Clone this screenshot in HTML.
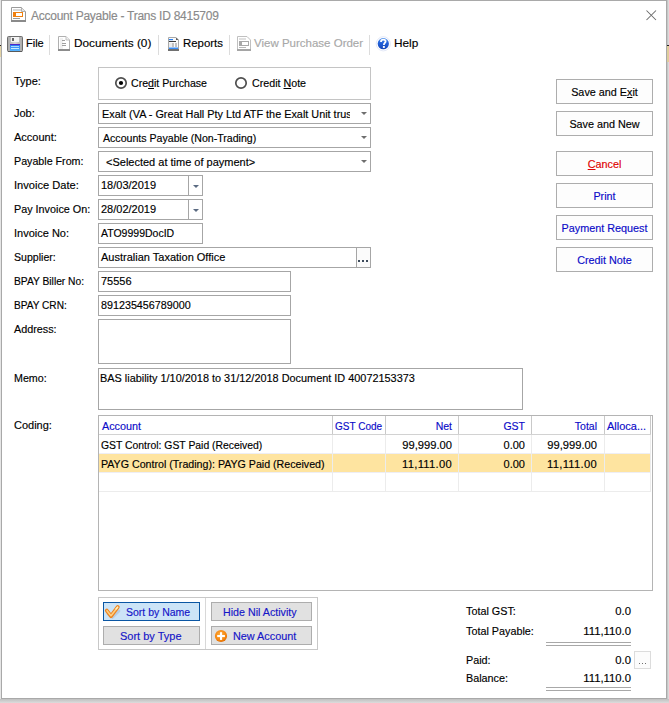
<!DOCTYPE html>
<html><head><meta charset="utf-8">
<style>
*{box-sizing:border-box;margin:0;padding:0}
html,body{width:669px;height:703px;overflow:hidden;background:#d6d6d6}
body{position:relative;font-family:"Liberation Sans",sans-serif;font-size:11px;color:#000;-webkit-text-stroke:0.15px currentColor}
.a{position:absolute}
#win{position:absolute;left:1px;top:0;width:666px;height:699px;background:#fff;border:1px solid #a9a9a9}
.t{position:absolute;white-space:nowrap;line-height:13px;font-size:11px}
.box{position:absolute;border:1px solid #a6a6a6;background:#fff;overflow:hidden}
.btn{position:absolute;border:1px solid #adadad;background:#fdfdfd;text-align:center;font-size:10.8px;line-height:13px;white-space:nowrap}
.sep{position:absolute;width:1px;background:#dcdcdc}
.arr{position:absolute;width:0;height:0;border-left:3px solid transparent;border-right:3px solid transparent;border-top:3px solid #6e6e6e}
.u{text-decoration:underline}
.blue{color:#0b0bc8}
.ghd{position:absolute;top:416px;height:19px;border-right:1px solid #c9c9c9;border-bottom:1px solid #d5d5d5}
.gtx{position:absolute;white-space:nowrap;font-size:10.5px;line-height:13px}
.pbtn{position:absolute;border:1px solid #adadad;background:#e1e1e1}
.pt{color:#1515c8}
</style></head><body>
<!-- backdrop -->
<div class="a" style="left:0;top:0;width:1px;height:703px;background:#e5e5e5"></div>
<div class="a" style="left:0;top:45px;width:1px;height:1px;background:#222"></div>
<div class="a" style="left:0;top:46px;width:1px;height:11px;background:#e3d3a5"></div>
<div class="a" style="left:667px;top:0;width:1px;height:703px;background:#c6c6c6"></div>
<div class="a" style="left:668px;top:0;width:1px;height:703px;background:#d9d9d9"></div>
<div class="a" style="left:667px;top:45px;width:2px;height:1px;background:#222"></div>
<div class="a" style="left:667px;top:46px;width:2px;height:16px;background:#dfcd9c"></div>
<div class="a" style="left:0;top:699px;width:669px;height:4px;background:linear-gradient(#c0c0c0,#dcdcdc)"></div>
<div id="win"></div>

<!-- title bar -->
<svg class="a" style="left:10px;top:6px" width="17" height="17" viewBox="0 0 17 17">
  <path d="M1.5 1.5H11.5L15.5 5.5V14.5H1.5Z" fill="#fff" stroke="#9a9a9a"/>
  <path d="M11.5 1.5V5.5H15.5" fill="#e6e6e6" stroke="#b0b0b0"/>
  <rect x="3" y="3" width="8" height="2" fill="#d8d8d8"/>
  <rect x="3" y="6" width="10" height="5" fill="#f0800f"/>
  <rect x="6" y="7" width="6" height="3" fill="#fff"/>
  <rect x="3" y="12" width="7" height="1" fill="#9a9a9a"/>
  <rect x="1" y="14" width="15" height="2" fill="#8a8a8a"/>
</svg>
<div class="t" style="left:31px;top:9px;font-size:12px;letter-spacing:-0.25px;line-height:15px;color:#8a8a8a">Account Payable - Trans ID 8415709</div>
<svg class="a" style="left:646px;top:10px" width="11" height="11" viewBox="0 0 11 11">
  <path d="M0.5 0.5L10 10M10 0.5L0.5 10" stroke="#6a6a6a" stroke-width="1.05"/>
</svg>

<!-- toolbar -->
<svg class="a" style="left:7px;top:36px" width="16" height="16" viewBox="0 0 16 16">
  <defs><linearGradient id="fb" x1="0" y1="0" x2="0" y2="1"><stop offset="0" stop-color="#1e6ff0"/><stop offset="1" stop-color="#5ab8ff"/></linearGradient>
  <linearGradient id="fg" x1="0" y1="0" x2="1" y2="0"><stop offset="0" stop-color="#a8a8a8"/><stop offset="0.5" stop-color="#d6d6d6"/><stop offset="1" stop-color="#a8a8a8"/></linearGradient></defs>
  <rect x="0.5" y="0.5" width="15" height="15" rx="1" fill="url(#fg)" stroke="#6e6e6e"/>
  <rect x="4" y="1" width="8" height="5" fill="#f4f4f4"/>
  <rect x="5" y="2" width="2" height="3" fill="#666"/>
  <rect x="3" y="8" width="10" height="7" fill="url(#fb)"/>
  <rect x="3" y="8" width="10" height="1" fill="#5026c8"/>
  <rect x="4" y="10" width="8" height="1" fill="#a8dcff"/>
  <rect x="4" y="12" width="8" height="1" fill="#c8eaff"/>
  <rect x="1" y="15" width="14" height="1" fill="#5a5a5a"/>
</svg>
<div class="t" style="left:26px;top:36px;font-size:11px;line-height:14px">File</div>
<div class="sep" style="left:49px;top:35px;height:20px"></div>
<svg class="a" style="left:57px;top:35px" width="14" height="17" viewBox="0 0 14 17">
  <path d="M1.5 1.5H9L12.5 5V15.5H1.5Z" fill="#fff" stroke="#b0b0b0"/>
  <rect x="3" y="3" width="3" height="11" fill="#f0f0f0"/>
  <path d="M9 1.5V5H12.5" fill="#f2f2f2" stroke="#c0c0c0"/>
  <rect x="5" y="5" width="3" height="1" fill="#a0a0a0"/>
  <rect x="5" y="8" width="4" height="1" fill="#a0a0a0"/>
  <rect x="5" y="10" width="4" height="1" fill="#a0a0a0"/>
  <rect x="1" y="14" width="12" height="2" fill="#8c8c8c"/>
</svg>
<div class="t" style="left:74px;top:36px;font-size:11.8px;line-height:14px">Documents (0)</div>
<div class="sep" style="left:158px;top:35px;height:20px"></div>
<svg class="a" style="left:167px;top:36px" width="13" height="15" viewBox="0 0 13 15">
  <path d="M1.5 1.5H9L11.5 4V13.5H1.5Z" fill="#fafafa" stroke="#a8a8a8"/>
  <path d="M9 1.5L11.5 4H9Z" fill="#5e5e5e"/>
  <rect x="2" y="3" width="4" height="1.2" fill="#2a80f0"/>
  <rect x="2" y="5" width="7" height="1" fill="#3c3c3c"/>
  <rect x="2" y="7" width="3" height="4" fill="#ececec"/>
  <rect x="5" y="7" width="2" height="4" fill="#c2c2c2"/>
  <rect x="8" y="7" width="2" height="4" fill="#c2c2c2"/>
  <rect x="2" y="11.5" width="9" height="1.5" fill="#3a8ef6"/>
  <rect x="1" y="13" width="11" height="2" fill="#707070"/>
</svg>
<div class="t" style="left:183px;top:36px;font-size:11.4px;line-height:14px">Reports</div>
<div class="sep" style="left:229px;top:35px;height:20px"></div>
<svg class="a" style="left:236px;top:35px" width="16" height="16" viewBox="0 0 16 16">
  <path d="M1.5 1.5H11L14.5 5V14.5H1.5Z" fill="#fff" stroke="#c0c0c0"/>
  <rect x="3" y="3" width="7" height="2" fill="#e0e0e0"/>
  <rect x="3" y="6" width="10" height="5" fill="#a8a8a8"/>
  <rect x="6" y="7" width="6" height="3" fill="#fff"/>
  <rect x="3" y="12" width="7" height="1" fill="#b8b8b8"/>
  <rect x="1" y="14" width="14" height="2" fill="#a5a5a5"/>
</svg>
<div class="t" style="left:254px;top:36px;font-size:11.5px;line-height:14px;color:#a8a8a8">View Purchase Order</div>
<div class="sep" style="left:369px;top:35px;height:20px"></div>
<svg class="a" style="left:375px;top:36px" width="16" height="16" viewBox="0 0 16 16">
  <defs><linearGradient id="hb" x1="0" y1="0" x2="0" y2="1"><stop offset="0" stop-color="#4a8ef0"/><stop offset="0.45" stop-color="#2160d8"/><stop offset="1" stop-color="#1a48b8"/></linearGradient></defs>
  <circle cx="8.3" cy="7.8" r="7.1" fill="none" stroke="#d8e0f4" stroke-width="0.7"/>
  <circle cx="8.3" cy="7.7" r="5.6" fill="url(#hb)"/>
  <path d="M6 5.9C6 4.4 7.1 3.6 8.4 3.6C9.7 3.6 10.6 4.4 10.6 5.5C10.6 6.9 8.9 7.1 8.9 8.9" fill="none" stroke="#fff" stroke-width="1.8"/>
  <rect x="7.9" y="10" width="1.9" height="1.9" fill="#fff"/>
</svg>
<div class="t" style="left:394px;top:36px;font-size:11.8px;line-height:14px">Help</div>

<!-- labels -->
<div class="t" style="left:14px;top:75px">Type:</div>
<div class="t" style="left:14px;top:107px">Job:</div>
<div class="t" style="left:14px;top:131px">Account:</div>
<div class="t" style="left:14px;top:155px;font-size:10.7px">Payable From:</div>
<div class="t" style="left:14px;top:179px;font-size:11.1px">Invoice Date:</div>
<div class="t" style="left:14px;top:203px;font-size:10.8px">Pay Invoice On:</div>
<div class="t" style="left:14px;top:227px">Invoice No:</div>
<div class="t" style="left:14px;top:251px;font-size:10.6px">Supplier:</div>
<div class="t" style="left:14px;top:275px;font-size:10.25px">BPAY Biller No:</div>
<div class="t" style="left:14px;top:299px;font-size:10.1px">BPAY CRN:</div>
<div class="t" style="left:14px;top:323px;font-size:10.8px">Address:</div>
<div class="t" style="left:14px;top:372px;font-size:10.7px">Memo:</div>
<div class="t" style="left:14px;top:419px">Coding:</div>

<!-- type group -->
<div class="box" style="left:98px;top:67px;width:273px;height:33px;border-color:#c4c4c4"></div>
<svg class="a" style="left:114px;top:76px" width="15" height="15" viewBox="0 0 15 15">
  <circle cx="7" cy="7" r="5.2" fill="#fff" stroke="#4e4e4e" stroke-width="1.7"/>
  <circle cx="7" cy="7" r="2.1" fill="#000"/>
</svg>
<div class="t" style="left:131px;top:77px;font-size:10.6px">Cre<span class="u">d</span>it Purchase</div>
<svg class="a" style="left:234px;top:76px" width="15" height="15" viewBox="0 0 15 15">
  <circle cx="7" cy="7" r="5.2" fill="#fff" stroke="#4e4e4e" stroke-width="1.7"/>
</svg>
<div class="t" style="left:252px;top:77px;font-size:10.7px">Credit <span class="u">N</span>ote</div>

<!-- combos -->
<div class="box" style="left:98px;top:103px;width:273px;height:21px"><div class="t" style="left:3px;top:4px;width:248px;overflow:hidden;font-size:10.85px">Exalt (VA - Great Hall Pty Ltd ATF the Exalt Unit trust)</div></div>
<div class="arr" style="left:361px;top:112px"></div>
<div class="box" style="left:98px;top:127px;width:273px;height:21px"><div class="t" style="left:4px;top:4px;font-size:10.6px">Accounts Payable (Non-Trading)</div></div>
<div class="arr" style="left:361px;top:136px"></div>
<div class="box" style="left:98px;top:151px;width:273px;height:21px"><div class="t" style="left:7px;top:4px">&lt;Selected at time of payment&gt;</div></div>
<div class="arr" style="left:361px;top:160px"></div>

<!-- dates -->
<div class="box" style="left:98px;top:175px;width:105px;height:21px"><div class="t" style="left:2px;top:3px">18/03/2019</div></div>
<div class="a" style="left:188px;top:176px;width:1px;height:19px;background:#a6a6a6"></div>
<div class="arr" style="left:193px;top:185px;border-top-color:#5b6b82"></div>
<div class="box" style="left:98px;top:199px;width:105px;height:21px"><div class="t" style="left:2px;top:3px">28/02/2019</div></div>
<div class="a" style="left:188px;top:200px;width:1px;height:19px;background:#a6a6a6"></div>
<div class="arr" style="left:193px;top:209px;border-top-color:#5b6b82"></div>
<div class="box" style="left:98px;top:223px;width:105px;height:21px"><div class="t" style="left:2px;top:3px;font-size:10.5px">ATO9999DocID</div></div>

<!-- supplier -->
<div class="box" style="left:98px;top:247px;width:273px;height:21px"><div class="t" style="left:2px;top:3px">Australian Taxation Office</div></div>
<div class="a" style="left:356px;top:248px;width:1px;height:19px;background:#a6a6a6"></div>
<div class="a" style="left:357px;top:248px;width:13px;height:19px;background:#fbfbfb"></div>
<div class="a" style="left:358px;top:260px;width:2px;height:2px;background:#3d4b5c"></div>
<div class="a" style="left:362px;top:260px;width:2px;height:2px;background:#3d4b5c"></div>
<div class="a" style="left:366px;top:260px;width:2px;height:2px;background:#3d4b5c"></div>

<div class="box" style="left:98px;top:271px;width:193px;height:21px"><div class="t" style="left:2px;top:3px">75556</div></div>
<div class="box" style="left:98px;top:295px;width:193px;height:21px"><div class="t" style="left:2px;top:3px;font-size:10.75px">891235456789000</div></div>
<div class="box" style="left:98px;top:319px;width:193px;height:45px"></div>
<div class="box" style="left:98px;top:368px;width:425px;height:42px"><div class="t" style="left:1px;top:3px;font-size:10.9px">BAS liability 1/10/2018 to 31/12/2018 Document ID 40072153373</div></div>

<!-- right buttons -->
<div class="btn" style="left:556px;top:79px;width:97px;height:25px;padding-top:6px">Save and E<span class="u">x</span>it</div>
<div class="btn" style="left:556px;top:111px;width:97px;height:25px;padding-top:6px">Save and New</div>
<div class="btn" style="left:556px;top:151px;width:97px;height:25px;padding-top:6px;color:#e00000"><span class="u">C</span>ancel</div>
<div class="btn blue" style="left:556px;top:183px;width:97px;height:25px;padding-top:6px">Print</div>
<div class="btn blue" style="left:556px;top:215px;width:97px;height:25px;padding-top:6px">Payment Request</div>
<div class="btn blue" style="left:556px;top:247px;width:97px;height:25px;padding-top:6px">Credit Note</div>

<!-- grid -->
<div class="box" style="left:98px;top:415px;width:555px;height:176px;border-color:#b4b4b4"></div>
<div class="a" style="left:99px;top:454px;width:551px;height:18px;background:#fee4a0"></div>
<div class="a" style="left:99px;top:434px;width:552px;height:1px;background:#d2d2d2"></div>
<div class="a" style="left:99px;top:453px;width:552px;height:1px;background:#eeeef4"></div>
<div class="a" style="left:99px;top:472px;width:552px;height:1px;background:#eeeef4"></div>
<div class="a" style="left:99px;top:491px;width:552px;height:1px;background:#ececec"></div>
<div class="a" style="left:332px;top:416px;width:1px;height:18px;background:#c9c9c9"></div>
<div class="a" style="left:385px;top:416px;width:1px;height:18px;background:#c9c9c9"></div>
<div class="a" style="left:458px;top:416px;width:1px;height:18px;background:#c9c9c9"></div>
<div class="a" style="left:531px;top:416px;width:1px;height:18px;background:#c9c9c9"></div>
<div class="a" style="left:604px;top:416px;width:1px;height:18px;background:#c9c9c9"></div>
<div class="a" style="left:650px;top:416px;width:1px;height:18px;background:#c9c9c9"></div>
<div class="a" style="left:332px;top:435px;width:1px;height:56px;background:#ececec"></div>
<div class="a" style="left:385px;top:435px;width:1px;height:56px;background:#ececec"></div>
<div class="a" style="left:458px;top:435px;width:1px;height:56px;background:#ececec"></div>
<div class="a" style="left:531px;top:435px;width:1px;height:56px;background:#ececec"></div>
<div class="a" style="left:604px;top:435px;width:1px;height:56px;background:#ececec"></div>
<div class="a" style="left:650px;top:435px;width:1px;height:56px;background:#ececec"></div>

<div class="gtx blue" style="left:102px;top:420px;font-size:10.8px">Account</div>
<div class="gtx blue" style="left:335px;top:420px;font-size:10px">GST Code</div>
<div class="gtx blue" style="left:386px;top:420px;width:66px;text-align:right">Net</div>
<div class="gtx blue" style="left:459px;top:420px;width:66px;text-align:right">GST</div>
<div class="gtx blue" style="left:532px;top:420px;width:65px;text-align:right">Total</div>
<div class="gtx blue" style="left:607px;top:420px;font-size:11px">Alloca...</div>

<div class="gtx" style="left:101px;top:439px;font-size:10.4px">GST Control: GST Paid (Received)</div>
<div class="gtx" style="left:386px;top:439px;width:66px;text-align:right;font-size:11.2px">99,999.00</div>
<div class="gtx" style="left:459px;top:439px;width:66px;text-align:right;font-size:11px">0.00</div>
<div class="gtx" style="left:532px;top:439px;width:65px;text-align:right;font-size:11.2px">99,999.00</div>
<div class="gtx" style="left:101px;top:458px;font-size:10.65px">PAYG Control (Trading): PAYG Paid (Received)</div>
<div class="gtx" style="left:386px;top:458px;width:66px;text-align:right;font-size:11.2px;letter-spacing:0.3px">11,111.00</div>
<div class="gtx" style="left:459px;top:458px;width:66px;text-align:right;font-size:11px">0.00</div>
<div class="gtx" style="left:532px;top:458px;width:65px;text-align:right;font-size:11.2px;letter-spacing:0.3px">11,111.00</div>

<!-- bottom panel -->
<div class="box" style="left:98px;top:597px;width:220px;height:53px;border-color:#c8c8c8"></div>
<div class="a" style="left:205px;top:598px;width:1px;height:51px;background:#d8d8d8"></div>
<div class="pbtn" style="left:103px;top:602px;width:97px;height:19px;background:#cce4f7;border-color:#0a56a3"></div>
<svg class="a" style="left:104px;top:602px" width="18" height="17" viewBox="0 0 18 17">
  <path d="M4 12L8.5 15.5L15 9" fill="none" stroke="#9fb4c8" stroke-opacity="0.45" stroke-width="2.5" stroke-linecap="round"/>
  <path d="M2.8 8.6L7 14.2L13.8 5" fill="none" stroke="#ee8420" stroke-width="3.8" stroke-linecap="round" stroke-linejoin="round"/>
  <path d="M3 8.7L7 13.7L13.6 5.2" fill="none" stroke="#ffcf80" stroke-width="1.6" stroke-linecap="round" stroke-linejoin="round"/>
  <path d="M12 7L13.6 5.2" fill="none" stroke="#fff3c0" stroke-width="1.4" stroke-linecap="round"/>
</svg>
<div class="t pt" style="left:126px;top:606px;font-size:10.5px">Sort by Name</div>
<div class="pbtn" style="left:103px;top:626px;width:97px;height:19px"></div>
<div class="t pt" style="left:120px;top:630px;font-size:11px">Sort by Type</div>
<div class="pbtn" style="left:211px;top:602px;width:101px;height:19px"></div>
<div class="t pt" style="left:223px;top:606px;font-size:10.7px">Hide Nil Activity</div>
<div class="pbtn" style="left:211px;top:626px;width:101px;height:19px"></div>
<div class="t pt" style="left:233px;top:630px;font-size:10.85px">New Account</div>
<svg class="a" style="left:214px;top:629px" width="14" height="14" viewBox="0 0 14 14">
  <defs><radialGradient id="og" cx="0.45" cy="0.4" r="0.6"><stop offset="0" stop-color="#ffb347"/><stop offset="0.75" stop-color="#f5860f"/><stop offset="1" stop-color="#e06a00"/></radialGradient></defs>
  <circle cx="7" cy="7" r="6.1" fill="url(#og)"/>
  <rect x="6" y="3.2" width="2.1" height="7.7" fill="#fff"/>
  <rect x="3.2" y="6" width="7.7" height="2.1" fill="#fff"/>
</svg>

<!-- totals -->
<div class="t" style="left:466px;top:605px;font-size:10.8px">Total GST:</div>
<div class="t" style="left:560px;top:605px;width:71px;text-align:right;font-size:11.3px">0.0</div>
<div class="t" style="left:466px;top:625px;font-size:10.8px">Total Payable:</div>
<div class="t" style="left:560px;top:625px;width:71px;text-align:right;font-size:11.3px">111,110.0</div>
<div class="a" style="left:546px;top:642px;width:85px;height:1px;background:#a8a8a8"></div>
<div class="a" style="left:546px;top:645px;width:85px;height:1px;background:#a8a8a8"></div>
<div class="t" style="left:466px;top:654px;font-size:10.8px">Paid:</div>
<div class="t" style="left:560px;top:654px;width:71px;text-align:right;font-size:11.3px">0.0</div>
<div class="a" style="left:634px;top:651px;width:17px;height:18px;border:1px solid #dcdcdc;background:#fcfcfc"></div>
<div class="a" style="left:639px;top:663px;width:1px;height:1px;background:#707070;box-shadow:3px 0 0 #707070,6px 0 0 #707070"></div>
<div class="t" style="left:466px;top:672px;font-size:10.8px">Balance:</div>
<div class="t" style="left:560px;top:672px;width:71px;text-align:right;font-size:11.3px">111,110.0</div>
<div class="a" style="left:546px;top:687px;width:85px;height:1px;background:#a8a8a8"></div>
<div class="a" style="left:546px;top:690px;width:85px;height:1px;background:#a8a8a8"></div>

</body></html>
